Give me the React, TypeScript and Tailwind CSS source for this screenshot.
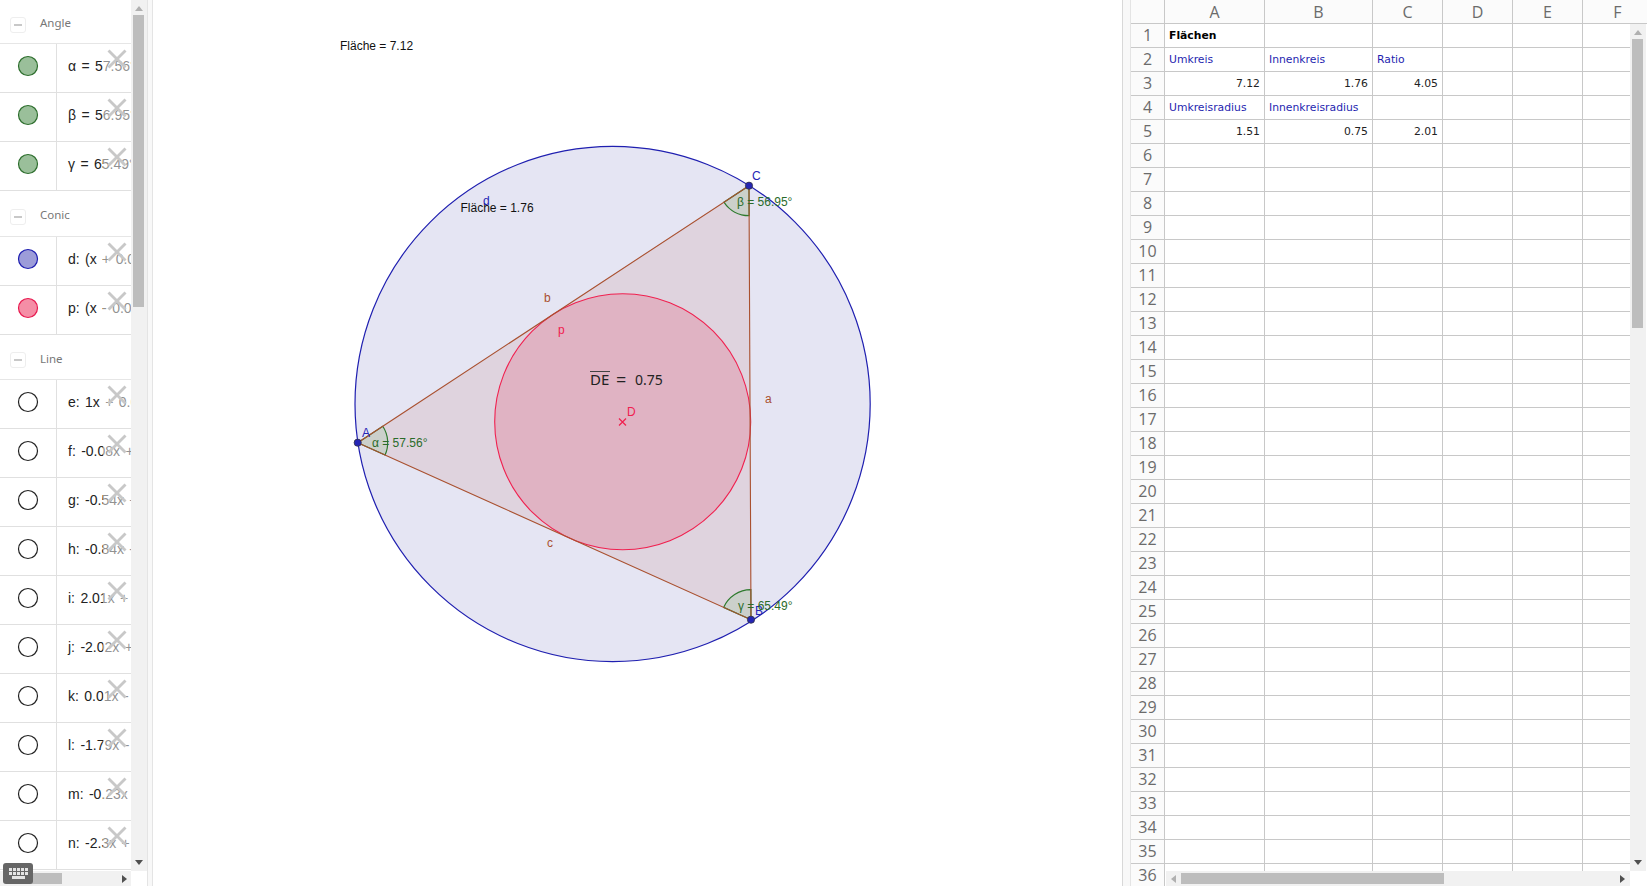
import { X } from "lucide-react"

const A: [number, number] = [357.7, 442.7]
const B: [number, number] = [751, 619.7]
const C: [number, number] = [749, 185.7]

type Row = { label: string; fill: string; stroke: string }

const GROUPS: { title: string; h: string; rows: Row[] }[] = [
  {
    title: "Angle",
    h: "h-[44px]",
    rows: [
      { label: "α = 57.56°", fill: "#9abf9a", stroke: "#2d6e2d" },
      { label: "β = 56.95°", fill: "#9abf9a", stroke: "#2d6e2d" },
      { label: "γ = 65.49°", fill: "#9abf9a", stroke: "#2d6e2d" },
    ],
  },
  {
    title: "Conic",
    h: "h-[46px]",
    rows: [
      { label: "d: (x + 0.01", fill: "#9c9cd9", stroke: "#1e1eb0" },
      { label: "p: (x - 0.01", fill: "#f58ea6", stroke: "#e8194f" },
    ],
  },
  {
    title: "Line",
    h: "h-[45px]",
    rows: [
      { label: "e: 1x + 0.01", fill: "#ffffff", stroke: "#222222" },
      { label: "f: -0.08x + 1", fill: "#ffffff", stroke: "#222222" },
      { label: "g: -0.54x + 1", fill: "#ffffff", stroke: "#222222" },
      { label: "h: -0.84x - 1", fill: "#ffffff", stroke: "#222222" },
      { label: "i: 2.01x + 1", fill: "#ffffff", stroke: "#222222" },
      { label: "j: -2.02x + 1", fill: "#ffffff", stroke: "#222222" },
      { label: "k: 0.01x - 2", fill: "#ffffff", stroke: "#222222" },
      { label: "l: -1.79x - 1", fill: "#ffffff", stroke: "#222222" },
      { label: "m: -0.23x - 1", fill: "#ffffff", stroke: "#222222" },
      { label: "n: -2.3x + 1", fill: "#ffffff", stroke: "#222222" },
    ],
  },
]

const COLS = [
  { name: "A", w: "w-[100px]" },
  { name: "B", w: "w-[108px]" },
  { name: "C", w: "w-[70px]" },
  { name: "D", w: "w-[70px]" },
  { name: "E", w: "w-[70px]" },
  { name: "F", w: "w-[70px]" },
]

const CELLS: Record<string, { t: string; cls: string }> = {
  A1: { t: "Flächen", cls: "font-bold text-black" },
  A2: { t: "Umkreis", cls: "text-[#1f1fb0]" },
  B2: { t: "Innenkreis", cls: "text-[#1f1fb0]" },
  C2: { t: "Ratio", cls: "text-[#1f1fb0]" },
  A3: { t: "7.12", cls: "text-right text-[#222222]" },
  B3: { t: "1.76", cls: "text-right text-[#222222]" },
  C3: { t: "4.05", cls: "text-right text-[#222222]" },
  A4: { t: "Umkreisradius", cls: "text-[#1f1fb0]" },
  B4: { t: "Innenkreisradius", cls: "text-[#1f1fb0]" },
  A5: { t: "1.51", cls: "text-right text-[#222222]" },
  B5: { t: "0.75", cls: "text-right text-[#222222]" },
  C5: { t: "2.01", cls: "text-right text-[#222222]" },
}

const ROW_NUMS = Array.from({ length: 36 }, (_, i) => i + 1)

const HEAD_BG =
  "bg-[#fbfbfb] bg-[radial-gradient(#e9e9e9_0.6px,transparent_0.6px)] bg-[length:6px_6px]"

function arc(p: [number, number], from: [number, number], to: [number, number], r: number) {
  const pt = (q: [number, number]) => {
    const dx = q[0] - p[0]
    const dy = q[1] - p[1]
    const d = Math.hypot(dx, dy)
    return [p[0] + (dx / d) * r, p[1] + (dy / d) * r]
  }
  const a = pt(from)
  const b = pt(to)
  return `M${p[0]} ${p[1]} L${a[0]} ${a[1]} A${r} ${r} 0 0 1 ${b[0]} ${b[1]} Z`
}

function VScroll({ thumb }: { thumb: string }) {
  return (
    <div className="w-[16px] shrink-0 bg-[#f1f1f1] pl-[2px] py-[6px]">
      <div className="w-[11px] h-full flex flex-col items-center justify-between">
        <div className="w-full flex flex-col items-center">
          <div className="w-0 h-0 border-x-[4px] border-x-transparent border-b-[5px] border-b-[#b0b0b0]" />
          <div className={`w-full mt-[4px] bg-[#bdbdbd] ${thumb}`} />
        </div>
        <div className="w-0 h-0 border-x-[4px] border-x-transparent border-t-[5px] border-t-[#505050]" />
      </div>
    </div>
  )
}

function Algebra() {
  return (
    <div className="relative w-[147px] shrink-0 h-[886px] flex flex-col bg-white">
      <div className="h-[871px] flex">
        <div className="w-[131px] overflow-hidden">
          {GROUPS.map(g => (
            <div key={g.title}>
              <div className={`${g.h} flex items-center pl-[10px] pt-[6px] border-b border-[#e6e6e6]`}>
                <div className="w-4 h-4 rounded-[3px] border border-[#eeeeee] flex items-center justify-center">
                  <div className="w-2 h-[2px] bg-[#c8c8c8]" />
                </div>
                <span className="ml-[14px] -mt-[3px] text-[11.5px] text-[#777777] font-['Noto_Sans',sans-serif]">{g.title}</span>
              </div>
              {g.rows.map(r => (
                <div key={r.label} className="relative h-[49px] flex border-b border-[#e0e0e0]">
                  <div className="w-[57px] shrink-0 flex items-center justify-center pb-[4px] border-r border-[#e0e0e0]">
                    <svg width="22" height="22" viewBox="0 0 22 22">
                      <circle cx="11" cy="11" r="9.5" fill={r.fill} stroke={r.stroke} strokeWidth="1.2" />
                    </svg>
                  </div>
                  <div className="pl-[11px] pb-[4px] flex items-center whitespace-nowrap text-[14px] [word-spacing:1.5px] text-[#222222] font-['Liberation_Sans',sans-serif]">
                    {r.label}
                  </div>
                  <div className="absolute left-[103px] top-0 bottom-0 w-[28px] bg-white/50" />
                  <X className="absolute left-[100px] -top-[2px] w-[34px] h-[34px] text-[#c8c8c8]" strokeWidth={2} absoluteStrokeWidth strokeLinecap="butt" />
                </div>
              ))}
            </div>
          ))}
        </div>
        <VScroll thumb="h-[292px]" />
      </div>

      {/* horizontal scrollbar */}
      <div className="w-[131px] h-[15px] bg-[#f1f1f1] flex items-center justify-between pl-[16px] pr-[4px]">
        <div className="w-[46px] h-[11px] bg-[#bdbdbd]" />
        <div className="w-0 h-0 border-y-[4px] border-y-transparent border-l-[5px] border-l-[#505050]" />
      </div>

      {/* keyboard button */}
      <div className="absolute left-[3px] top-[863px] w-[30px] h-[21px] rounded-[3px] bg-[#666666] flex flex-col items-center justify-center gap-[1px]">
        <div className="grid grid-cols-5 gap-[1px]">
          {Array.from({ length: 10 }, (_, i) => (
            <div key={i} className="w-[3px] h-[3px] bg-[#e4e4e4]" />
          ))}
        </div>
        <div className="w-[13px] h-[3px] bg-[#e4e4e4]" />
      </div>
    </div>
  )
}

function Graphics() {
  const point = { r: 3.6, fill: "#2525b5", stroke: "#333344", strokeWidth: 0.8 }
  return (
    <div className="flex-1 h-[886px] bg-white">
      <svg width="969" height="886" viewBox="153 0 969 886" className="block font-['Liberation_Sans',sans-serif]">
        <circle cx="612.6" cy="404" r="257.6" fill="#e5e5f3" stroke="#1f1fb0" strokeWidth="1.2" />
        <polygon points={`${A} ${B} ${C}`} fill="#dfd3de" />
        <circle cx="622.7" cy="421.7" r="128" fill="#e0b3c3" stroke="#f0204f" strokeWidth="1.1" />
        <path d={arc(A, C, B, 30)} fill="#cbd0cb" stroke="#2d7a2d" strokeWidth="1.2" />
        <path d={arc(C, B, A, 30)} fill="#cbd0cb" stroke="#2d7a2d" strokeWidth="1.2" />
        <path d={arc(B, A, C, 30)} fill="#cbd0cb" stroke="#2d7a2d" strokeWidth="1.2" />
        <polygon points={`${A} ${B} ${C}`} fill="none" stroke="#a9502f" strokeWidth="1.1" />

        <circle cx={C[0]} cy={C[1]} {...point} />
        <circle cx={A[0]} cy={A[1]} {...point} />
        <circle cx={B[0]} cy={B[1]} {...point} />

        <path d="M619 418.5l7 7M626 418.5l-7 7" stroke="#f0204f" strokeWidth="1.2" fill="none" />

        <text x="340" y="50" fontSize="12" fill="#111111">Fläche = 7.12</text>
        <text x="460.5" y="212" fontSize="12" fill="#111111">Fläche = 1.76</text>
        <text x="483" y="205" fontSize="12" fill="#2525b5">d</text>
        <text x="752" y="180" fontSize="12" fill="#2525b5">C</text>
        <text x="362" y="437" fontSize="12" fill="#2525b5">A</text>
        <text x="755" y="615" fontSize="12" fill="#2525b5">B</text>
        <text x="627" y="416" fontSize="12" fill="#f0204f">D</text>
        <text x="558" y="334" fontSize="12" fill="#f0204f">p</text>
        <text x="544" y="302" fontSize="12" fill="#a9502f">b</text>
        <text x="765" y="403" fontSize="12" fill="#a9502f">a</text>
        <text x="547" y="547" fontSize="12" fill="#a9502f">c</text>
        <text x="372" y="447" fontSize="12" fill="#2a6b2a">α = 57.56°</text>
        <text x="737" y="206" fontSize="12" fill="#2a6b2a">β = 56.95°</text>
        <text x="738" y="610" fontSize="12" fill="#2a6b2a">γ = 65.49°</text>

        <text x="590" y="385" fontSize="15" fill="#222222" className="font-['Noto_Sans',sans-serif]">DE</text>
        <line x1="590" y1="371.5" x2="610" y2="371.5" stroke="#444444" strokeWidth="1" />
        <text x="616" y="386" fontSize="18" fill="#222222" className="font-['Noto_Sans',sans-serif]">=</text>
        <text x="635" y="385" fontSize="14" fill="#222222" className="font-['Noto_Sans',sans-serif]">0.75</text>
      </svg>
    </div>
  )
}

function Spreadsheet() {
  return (
    <div className="w-[525px] shrink-0 h-[886px] overflow-hidden flex bg-white border-l border-[#d8d8d8] font-['DejaVu_Sans',sans-serif]">
      <div className="w-[8px] shrink-0 bg-[#f8f8f8] border-r border-[#e4e4e4]" />
      <div className="flex-1 flex flex-col min-w-0">
        {/* column headers */}
        <div className="flex h-[24px] shrink-0">
          <div className={`w-[34px] shrink-0 border-b border-r border-[#c8c8c8] ${HEAD_BG}`} />
          {COLS.map(c => (
            <div key={c.name} className={`${c.w} shrink-0 border-b border-r border-[#c8c8c8] flex items-center justify-center text-[16px] text-[#6b6b6b] font-['Open_Sans',sans-serif] ${HEAD_BG}`}>
              {c.name}
            </div>
          ))}
        </div>

        <div className="flex-1 flex min-h-0">
          {/* row headers */}
          <div className="w-[34px] shrink-0 overflow-hidden">
            {ROW_NUMS.map(n => (
              <div key={n} className={`h-[24px] border-b border-r border-[#c8c8c8] flex items-center justify-center pb-[2px] text-[16px] text-[#6b6b6b] font-['Open_Sans',sans-serif] ${HEAD_BG}`}>
                {n}
              </div>
            ))}
          </div>

          <div className="flex-1 flex flex-col min-w-0">
            <div className="h-[847px] flex shrink-0">
              {/* cells */}
              <div className="w-[465px] shrink-0 overflow-hidden">
                {ROW_NUMS.map(n => (
                  <div key={n} className="flex h-[24px]">
                    {COLS.map(c => {
                      const cell = CELLS[`${c.name}${n}`]
                      return (
                        <div key={c.name} className={`${c.w} shrink-0 border-b border-r border-[#c8c8c8] px-[4px] pt-[1px] flex items-center whitespace-nowrap text-[10.8px]`}>
                          {cell && <span className={`w-full ${cell.cls}`}>{cell.t}</span>}
                        </div>
                      )
                    })}
                  </div>
                ))}
              </div>
              <VScroll thumb="h-[289px]" />
            </div>

            {/* horizontal scrollbar */}
            <div className="w-[464px] ml-[1px] h-[15px] bg-[#f1f1f1] flex items-center pl-[5px] pr-[5px]">
              <div className="w-0 h-0 border-y-[4px] border-y-transparent border-r-[5px] border-r-[#b0b0b0]" />
              <div className="w-[263px] h-[11px] ml-[5px] bg-[#bdbdbd]" />
              <div className="flex-1" />
              <div className="w-0 h-0 border-y-[4px] border-y-transparent border-l-[5px] border-l-[#505050]" />
            </div>
          </div>
        </div>
      </div>
    </div>
  )
}

export default function App() {
  return (
    <div className="flex w-[1647px] h-[888px] overflow-hidden bg-white">
      <Algebra />
      <div className="w-[6px] shrink-0 h-[886px] bg-[#f8f8f8] border-x border-[#e4e4e4]" />
      <Graphics />
      <Spreadsheet />
    </div>
  )
}
